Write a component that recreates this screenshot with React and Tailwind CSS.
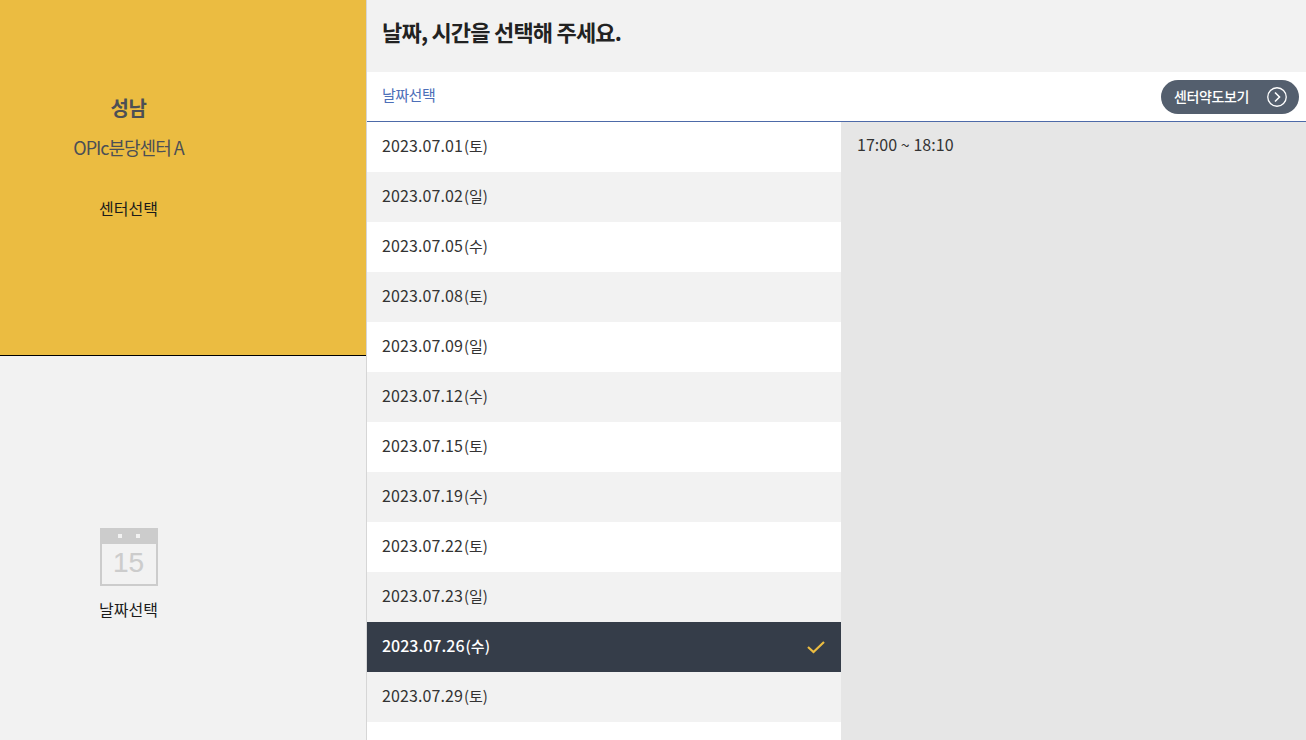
import React from 'react';

const dates = [
  ['2023.07.01', '(토)'],
  ['2023.07.02', '(일)'],
  ['2023.07.05', '(수)'],
  ['2023.07.08', '(토)'],
  ['2023.07.09', '(일)'],
  ['2023.07.12', '(수)'],
  ['2023.07.15', '(토)'],
  ['2023.07.19', '(수)'],
  ['2023.07.22', '(토)'],
  ['2023.07.23', '(일)'],
  ['2023.07.26', '(수)'],
  ['2023.07.29', '(토)'],
];

const font = { fontFamily: '"Noto Sans CJK KR", "Noto Sans", sans-serif' };

const CalendarIcon = () => (
  <svg width="58" height="58" viewBox="0 0 58 58" className="block">
    <rect x="0" y="0" width="58" height="58" fill="#cccccc" />
    <rect x="2" y="16" width="54" height="40" fill="#f2f2f2" />
    <rect x="18" y="6" width="4" height="4" fill="#f2f2f2" />
    <rect x="36" y="6" width="4" height="4" fill="#f2f2f2" />
    <text x="28.5" y="44" textAnchor="middle" fontSize="28" fill="#cccccc" stroke="#cccccc" strokeWidth="0.15" fontFamily="Liberation Sans">15</text>
  </svg>
);

const ArrowCircle = () => (
  <svg width="20" height="20" viewBox="0 0 20 20" fill="none" stroke="#ffffff">
    <circle cx="10" cy="10" r="9.25" strokeWidth="1.3" />
    <path d="M8 5.5 L12.5 10 L8 14.5" strokeWidth="1.6" />
  </svg>
);

export default function App() {
  return (
    <div className="flex h-[740px] w-[1306px] overflow-hidden bg-white" style={font}>
      <aside className="flex w-[367px] shrink-0 flex-col border-r border-[#d6d6d6] bg-[#f2f2f2]">
        <div className="h-[356px] shrink-0 border-b border-black bg-[#ebbc41]">
          <div className="flex w-[257px] flex-col items-center">
            <p className="mt-[94px] text-[20px] leading-[28px] font-bold tracking-[-0.5px] text-[#4c4f55]">성남</p>
            <p className="mt-[12px] text-[18px] leading-[26px] tracking-[-1px] text-[#4c4f55]">OPIc분당센터 A</p>
            <p className="mt-[36px] text-[16px] leading-[24px] text-[#1b1b1b]">센터선택</p>
          </div>
        </div>
        <div className="flex w-[257px] flex-col items-center pt-[172px]">
          <CalendarIcon />
          <p className="mt-[11px] text-[16px] leading-[24px] text-[#1b1b1b]">날짜선택</p>
        </div>
      </aside>

      <main className="flex min-w-0 flex-1 flex-col">
        <div className="flex h-[72px] shrink-0 items-center bg-[#f2f2f2] pb-[10px] pl-[15px]">
          <h1 className="text-[22px] leading-[32px] font-bold tracking-[-0.8px] text-[#222222]">날짜, 시간을 선택해 주세요.</h1>
        </div>
        <div className="flex h-[50px] shrink-0 items-center justify-between border-b border-[#4d6aa8] pr-[7px] pl-[15px]">
          <span className="mb-[3px] text-[15px] tracking-[-0.5px] text-[#4d6fb8]">날짜선택</span>
          <button className="flex h-[34px] w-[138px] items-center justify-between rounded-full bg-[#545f6e] pr-[12px] pl-[13px] text-[14px] font-medium tracking-[-0.4px] text-white">
            <span className="mb-[1px]">센터약도보기</span>
            <ArrowCircle />
          </button>
        </div>
        <div className="flex min-h-0 flex-1">
          <ul className="w-[474px] shrink-0">
            {dates.map(([day, weekday], i) => {
              const active = day === '2023.07.26';
              return (
                <li
                  key={day}
                  className={
                    active
                      ? 'flex h-[50px] items-center justify-between bg-[#353d49] pr-[16px] pl-[15px] text-[16px] font-medium text-white'
                      : i % 2 === 0
                        ? 'flex h-[50px] items-center bg-white pl-[15px] text-[16px] font-normal text-[#333333]'
                        : 'flex h-[50px] items-center bg-[#f2f2f2] pl-[15px] text-[16px] font-normal text-[#333333]'
                  }
                >
                  <span className="mb-[4px] flex items-baseline">
                    <span className={active ? 'tracking-[0px]' : 'tracking-[0.1px]'}>{day}</span>
                    <span className="ml-[1px] text-[15px]">{weekday}</span>
                  </span>
                  {active && (
                    <svg width="18" height="14" viewBox="0 0 18 14" fill="none" stroke="#ebbc41" strokeWidth="2.2">
                      <path d="M1 7 L6.5 12 L17 2" />
                    </svg>
                  )}
                </li>
              );
            })}
            <li className="h-[50px] bg-white" />
          </ul>
          <div className="flex-1 bg-[#e6e6e6] pt-[10px] pl-[16px]">
            <span className="text-[16px] leading-[22px] font-normal tracking-[0.05px] text-[#333333]">17:00 ~ 18:10</span>
          </div>
        </div>
      </main>
    </div>
  );
}
